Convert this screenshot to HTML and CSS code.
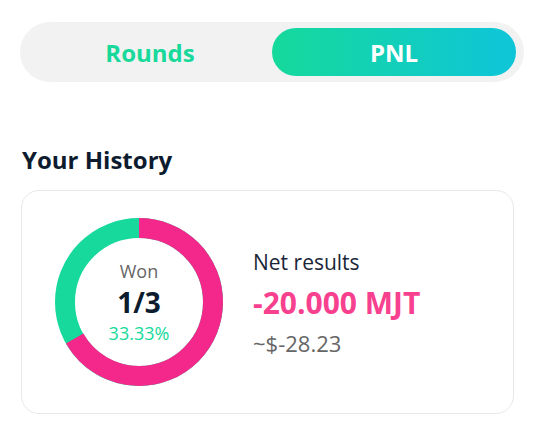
FILE: index.html
```html
<!DOCTYPE html>
<html>
<head>
<meta charset="utf-8">
<link rel="stylesheet" href="styles.css">
</head>
<body>
<div class="page">
  <div class="toggle">
    <div class="tab">Rounds</div>
    <div class="tab active">PNL</div>
  </div>
  <h2 class="title">Your History</h2>
  <div class="card">
    <div class="donut">
      <svg width="168" height="168" viewBox="0 0 168 168">
        <circle cx="84" cy="84" r="74" fill="none" stroke="#17d99c" stroke-width="20"/>
        <circle cx="84" cy="84" r="74" fill="none" stroke="#f4288b" stroke-width="20" stroke-dasharray="309.97 464.96" transform="rotate(-90 84 84)"/>
      </svg>
      <div class="donut-text">
        <div class="won">Won</div>
        <div class="ratio">1/3</div>
        <div class="pct">33.33%</div>
      </div>
    </div>
    <div class="net">
      <div class="net-label">Net results</div>
      <div class="net-value">-20.000 MJT</div>
      <div class="net-usd">~$-28.23</div>
    </div>
  </div>
</div>
</body>
</html>
```

FILE: styles.css
```css
html, body {
  margin: 0;
  padding: 0;
  background: #ffffff;
}
body {
  font-family: "Open Sans", "Noto Sans", sans-serif;
}
.page {
  padding: 22px 19px 0 20px;
}
.toggle {
  width: 504px;
  height: 60px;
  box-sizing: border-box;
  padding: 6px 8px;
  background: #f2f2f2;
  border-radius: 30px;
  display: grid;
  grid-template-columns: 1fr 1fr;
}
.tab {
  display: flex;
  align-items: center;
  justify-content: center;
  border-radius: 24px;
  font-size: 24px;
  font-weight: 700;
  color: #18d99a;
}
.tab.active {
  background: linear-gradient(90deg, #16d99b 0%, #0ec5d9 100%);
  color: #ffffff;
}
.title {
  margin: 63px 0 0 2px;
  font-size: 24px;
  line-height: 30px;
  font-weight: 700;
  color: #0d1b2e;
}
.card {
  margin: 15px 0 0 1px;
  width: 493px;
  height: 224px;
  box-sizing: border-box;
  border: 1px solid #e8e8e8;
  border-radius: 18px;
  display: flex;
  align-items: center;
  padding: 0 0 0 33px;
  gap: 30px;
}
.donut {
  position: relative;
  width: 168px;
  height: 168px;
}
.donut svg {
  display: block;
}
.donut-text {
  position: absolute;
  inset: 0;
  display: flex;
  flex-direction: column;
  align-items: center;
  justify-content: center;
}
.won {
  font-size: 18px;
  line-height: 24px;
  color: #666666;
}
.ratio {
  font-size: 28px;
  line-height: 38px;
  font-weight: 700;
  color: #0d1b2e;
}
.pct {
  font-size: 18px;
  line-height: 24px;
  color: #17d99c;
}
.net {
  display: flex;
  flex-direction: column;
}
.net-label {
  font-size: 21px;
  line-height: 28px;
  color: #1b2538;
}
.net-value {
  margin-top: 9px;
  font-size: 30px;
  line-height: 36px;
  font-weight: 700;
  color: #f7418f;
}
.net-usd {
  margin-top: 8px;
  font-size: 22px;
  line-height: 28px;
  color: #666666;
}
```
